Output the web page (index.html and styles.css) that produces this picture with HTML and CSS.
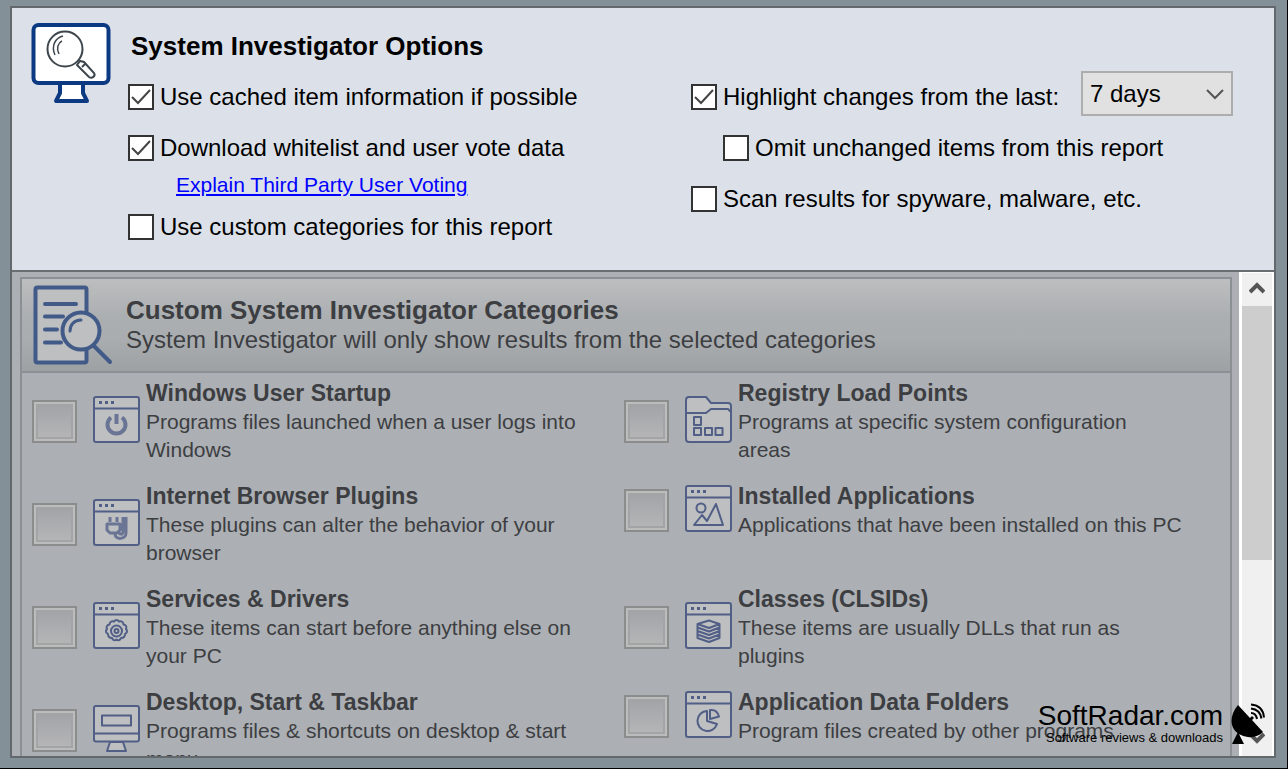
FILE: index.html
```
<!DOCTYPE html>
<html lang="en">

<head>
    <meta charset="UTF-8">
    <meta name="viewport" content="width=device-width, initial-scale=1.0">
    <title>System Investigator</title>
    <link rel="stylesheet" href="styles.css">
</head>

<body>
    <!--window frame shared by the category icons-->
    <svg class="defs" width="0" height="0">
        <symbol id="frame" viewBox="0 0 47 47">
            <rect x="1" y="1" width="45" height="45" rx="2" />
            <path d="M1 12.500h45" />
            <path class="dots" d="M6 6.500h3M12 6.500h3M18 6.500h3" />
        </symbol>
    </svg>

    <div class="window">
        <section class="options">
            <svg class="monitor" viewBox="0 0 80 82">
                <path d="M29 61v10l-4 8h31l-4-8v-10z" fill="#fff" stroke="#0b3a82" stroke-width="4" stroke-linejoin="round" />
                <rect x="2.500" y="3" width="75" height="58" rx="5" fill="#fff" stroke="#0b3a82" stroke-width="4" />
                <g fill="none" stroke="#3d464d" stroke-width="2">
                    <circle cx="34" cy="27" r="17.500" />
                    <path d="M24 33c-4-9 0-17 8-19M28 32c-3-6-1-11 3-13" stroke-width="1.500" />
                    <path d="M46 43l3-4 4 1 10 11c2 3-2 6-5 4L47 44zM51 45l4-4" />
                </g>
            </svg>
            <div class="options-body">
                <h1>System Investigator Options</h1>
                <div class="options-columns">
                    <div class="column">
                        <label class="option"><input type="checkbox" checked>Use cached item information if possible</label>
                        <label class="option"><input type="checkbox" checked>Download whitelist and user vote data</label>
                        <a class="explain" href="#">Explain Third Party User Voting</a>
                        <label class="option"><input type="checkbox">Use custom categories for this report</label>
                    </div>
                    <div class="column">
                        <div class="highlight-row">
                            <label class="option"><input type="checkbox" checked>Highlight changes from the last:</label>
                            <select aria-label="Number of days">
                                <option>7 days</option>
                                <option>14 days</option>
                                <option>30 days</option>
                            </select>
                        </div>
                        <label class="option sub"><input type="checkbox">Omit unchanged items from this report</label>
                        <label class="option"><input type="checkbox">Scan results for spyware, malware, etc.</label>
                    </div>
                </div>
            </div>
        </section>

        <section class="custom">
            <div class="custom-box">
                <header class="custom-header">
                    <svg class="report" viewBox="0 0 80 80">
                        <g fill="#bebfc0" stroke="#425a87" stroke-width="4" stroke-linecap="round">
                            <rect x="2.500" y="2.500" width="51" height="75" rx="2" />
                            <path d="M12 19h31M12 31.500h18M12 44.500h12M12 57.500h16" />
                            <path d="M61 61l16 16" />
                            <circle cx="48" cy="46" r="18.500" />
                            <path d="M37 46c0-6 4-11 11-11" fill="none" stroke-width="3" />
                        </g>
                    </svg>
                    <div>
                        <h2>Custom System Investigator Categories</h2>
                        <p>System Investigator will only show results from the selected categories</p>
                    </div>
                </header>

                <div class="categories">
                    <label class="category">
                        <input type="checkbox" disabled>
                        <svg class="icon" viewBox="0 0 47 47">
                            <use href="#frame" />
                            <path class="bold" d="M18 21.500a9 9 0 1 0 11 0M23.500 18v10" />
                        </svg>
                        <span class="text">
                            <strong>Windows User Startup</strong>
                            <span>Programs files launched when a user logs into Windows</span>
                        </span>
                    </label>
                    <label class="category">
                        <input type="checkbox" disabled>
                        <svg class="icon" viewBox="0 0 47 47">
                            <path d="M1 4a3 3 0 0 1 3-3h17l5 6h17a3 3 0 0 1 3 3v33a3 3 0 0 1-3 3H4a3 3 0 0 1-3-3z" />
                            <path d="M1 17h20l5-4h17l3 3" />
                            <path d="M9 21h7v8H9zM9 32h7v7H9zM20 32h7v7h-7zM30.500 32h7v7h-7z" />
                        </svg>
                        <span class="text">
                            <strong>Registry Load Points</strong>
                            <span>Programs at specific system configuration areas</span>
                        </span>
                    </label>

                    <label class="category">
                        <input type="checkbox" disabled>
                        <svg class="icon" viewBox="0 0 47 47">
                            <use href="#frame" />
                            <path class="plug" d="M17 18v5M24 18v5M14 25h13v6l-3 3h-7l-3-3zM22 35c0 6 11 6 11-1V18M30 18v14c0 5-4 3-4 1" />
                        </svg>
                        <span class="text">
                            <strong>Internet Browser Plugins</strong>
                            <span>These plugins can alter the behavior of your browser</span>
                        </span>
                    </label>
                    <label class="category">
                        <input type="checkbox" disabled>
                        <svg class="icon" viewBox="0 0 47 47">
                            <use href="#frame" />
                            <circle cx="16" cy="23" r="4.500" />
                            <path d="M9 40l8-10 5 6 9-17 7 21z" />
                        </svg>
                        <span class="text">
                            <strong>Installed Applications</strong>
                            <span>Applications that have been installed on this PC</span>
                        </span>
                    </label>

                    <label class="category">
                        <input type="checkbox" disabled>
                        <svg class="icon" viewBox="0 0 47 47">
                            <use href="#frame" />
                            <path d="M21 19.500q2.500-3 5 0q4-1 4.500 3q4 1 2.500 4.500q2.500 3-1 5q0 4-4 4q-1.500 3.500-4.500 1.500q-3 2-4.500-1.500q-4 0-4-4q-3.500-2-1-5q-1.500-3.500 2.500-4.500q.5-4 4.500-3z" />
                            <circle cx="23.500" cy="29" r="5.500" />
                            <circle cx="23.500" cy="29" r="2" />
                        </svg>
                        <span class="text">
                            <strong>Services &amp; Drivers</strong>
                            <span>These items can start before anything else on your PC</span>
                        </span>
                    </label>
                    <label class="category">
                        <input type="checkbox" disabled>
                        <svg class="icon" viewBox="0 0 47 47">
                            <use href="#frame" />
                            <path d="M12.500 22L24 18.500 34.500 22v14L24 40l-11.500-4zM12.500 22L24 26l10.500-4M12.500 25.500L24 29.500l10.500-4M12.500 29L24 33l10.500-4M12.500 32.500L24 36.500l10.500-4" />
                        </svg>
                        <span class="text">
                            <strong>Classes (CLSIDs)</strong>
                            <span>These items are usually DLLs that run as plugins</span>
                        </span>
                    </label>

                    <label class="category">
                        <input type="checkbox" disabled>
                        <svg class="icon" viewBox="0 0 47 47">
                            <path d="M17 37l-3 9h19l-3-9z" />
                            <rect x="1" y="1" width="45" height="35.500" rx="2" />
                            <path d="M1 28.500h45M9 10.500h29v10H9z" />
                        </svg>
                        <span class="text">
                            <strong>Desktop, Start &amp; Taskbar</strong>
                            <span>Programs files &amp; shortcuts on desktop &amp; start menu</span>
                        </span>
                    </label>
                    <label class="category">
                        <input type="checkbox" disabled>
                        <svg class="icon" viewBox="0 0 47 47">
                            <use href="#frame" />
                            <path d="M22 20a10 10 0 1 0 10 13l-10-3z" />
                            <path d="M25 28V19q7-1 9 6.500z" />
                        </svg>
                        <span class="text">
                            <strong>Application Data Folders</strong>
                            <span>Program files created by other programs</span>
                        </span>
                    </label>
                </div>
            </div>

            <div class="scrollbar">
                <button type="button" aria-label="Scroll up">
                    <svg viewBox="0 0 16 14"><path d="M1 11l7-7 7 7" /></svg>
                </button>
                <div class="track"><div class="thumb"></div></div>
                <button type="button" aria-label="Scroll down">
                    <svg viewBox="0 0 16 14"><path d="M1 3l7 7 7-7" /></svg>
                </button>
            </div>
        </section>
    </div>

    <!--watermark over the bottom right corner-->
    <div class="watermark">
        <div>
            <div class="brand">SoftRadar.com</div>
            <div class="tagline">Software reviews &amp; downloads</div>
        </div>
        <svg class="dish" viewBox="0 0 34 42">
            <path d="M7 2C-3 14-1 27 10 32c8 4 17 2 22-3L21 17l2-2-2-2-2 2zM7 29L1 41h12z" />
            <path class="waves" d="M20 10q5 0 6 6M20 5.500q9 1 10.500 10M20 1.500q12 1 13 13" />
        </svg>
    </div>
</body>

</html>
```
FILE: styles.css
```
* {
    box-sizing: border-box;
    margin: 0;
    padding: 0;
}

body {
    height: 100vh;
    padding: 6px 11px 10px 10px;
    border-right: 1px solid #000;
    border-bottom: 1px solid #000;
    background: #839097;
    color: #000;
    font-family: "Liberation Sans", Arial, sans-serif;
    font-size: 24px;
    overflow: hidden;
}

.defs {
    position: absolute;
}

.window {
    display: flex;
    flex-direction: column;
    height: 100%;
    border: 2px solid #62686b;
    background: #dce0e8;
}

/* options */

.options {
    display: flex;
    gap: 17px;
    padding: 14px 41px 18px 19px;
    border-bottom: 2px solid #6a6e71;
}

.monitor {
    flex: none;
    width: 80px;
    height: 82px;
}

.options-body {
    flex: 1;
}

h1 {
    padding-left: 3px;
    font-size: 26px;
    line-height: 49px;
}

.options-columns {
    display: grid;
    grid-template-columns: 563px 1fr;
}

.option {
    display: flex;
    align-items: center;
    gap: 6px;
    height: 51px;
    white-space: nowrap;
}

.option input {
    appearance: none;
    flex: none;
    width: 26px;
    height: 26px;
    border: 2px solid #333;
    background: #fff;
}

.option input:checked {
    background: #fff url("data:image/svg+xml,%3Csvg xmlns='http://www.w3.org/2000/svg' viewBox='0 0 22 22'%3E%3Cpath d='M2 11l6 6L20 4' fill='none' stroke='%23444' stroke-width='2'/%3E%3C/svg%3E") center no-repeat;
}

.sub {
    margin-left: 32px;
}

.explain {
    display: block;
    margin: 0 0 5px 48px;
    color: #00f;
    font-size: 21px;
    line-height: 23px;
}

.highlight-row {
    display: flex;
    justify-content: space-between;
}

select {
    appearance: none;
    width: 152px;
    height: 45px;
    padding: 0 7px;
    border: 2px solid #adadad;
    border-radius: 0;
    background: #e1e1e1 url("data:image/svg+xml,%3Csvg xmlns='http://www.w3.org/2000/svg' width='18' height='12'%3E%3Cpath d='M1 2l8 8 8-8' fill='none' stroke='%23555' stroke-width='2'/%3E%3C/svg%3E") right 7px center no-repeat;
    color: #000;
    font: inherit;
}

/* categories */

.custom {
    display: flex;
    flex: 1;
    gap: 7px;
    min-height: 0;
    padding-left: 8px;
    background: #acb0b4;
    overflow: hidden;
}

.custom-box {
    flex: 1;
    height: max-content;
    margin-top: 5px;
    border: 2px solid #8b9094;
}

.custom-header {
    display: flex;
    align-items: center;
    gap: 13px;
    height: 94px;
    padding-left: 11px;
    border-bottom: 2px solid #8b9094;
    background: linear-gradient(#bcbebf, #acafb2 40%, #a9adb0 65%, #9da1a4);
    color: #3d3e42;
}

.report {
    width: 80px;
    height: 80px;
}

h2 {
    font-size: 26px;
    line-height: 30px;
}

.custom-header p {
    line-height: 30px;
}

.categories {
    display: grid;
    grid-template-columns: 1fr 1fr;
    row-gap: 18px;
    align-items: start;
    padding: 6px 14px 6px 10px;
}

.category {
    display: flex;
    align-items: center;
    padding-right: 33px;
    color: #3d3e42;
}

.category input {
    appearance: none;
    flex: none;
    width: 45px;
    height: 43px;
    margin-right: 16px;
    padding: 2px;
    border: 2px solid #8b8c8c;
    outline: 2px solid #a3a4a5;
    outline-offset: -6px;
    background: linear-gradient(#a1a3a7, #b6b6b7) content-box, #bcbcbc;
}

.icon {
    flex: none;
    width: 47px;
    height: 47px;
    margin: 0 6px 4px 0;
    fill: #bebfc0;
    stroke: #515f87;
    stroke-width: 2;
    stroke-linejoin: round;
}

.bold {
    fill: none;
    stroke: #6a7595;
    stroke-width: 4;
}

.plug {
    fill: none;
    stroke: #6a7595;
    stroke-width: 3;
}

.dots {
    stroke-width: 3;
}

.text strong {
    display: block;
    font-size: 23px;
    line-height: 29px;
}

.text span {
    display: block;
    font-size: 21px;
    line-height: 28px;
}

/* scrollbar */

.scrollbar {
    display: flex;
    flex-direction: column;
    width: 35px;
    border: solid #fff;
    border-width: 1px 2px 0 3px;
    background: #f0f0f0;
}

.scrollbar button {
    height: 33px;
    border: none;
    background: none;
}

.scrollbar svg {
    width: 16px;
    height: 14px;
    fill: none;
    stroke: #555;
    stroke-width: 4;
}

.track {
    flex: 1;
}

.thumb {
    height: 61%;
    background: #cdcdcd;
}

/* watermark */

.watermark {
    position: absolute;
    right: 23px;
    bottom: 24px;
    display: flex;
    align-items: flex-end;
    gap: 8px;
    text-align: right;
}

.brand {
    font-size: 28px;
    line-height: 28px;
}

.tagline {
    font-size: 13px;
    line-height: 15px;
}

.dish {
    width: 34px;
    height: 42px;
}

.waves {
    fill: none;
    stroke: #000;
    stroke-width: 2;
}
```
